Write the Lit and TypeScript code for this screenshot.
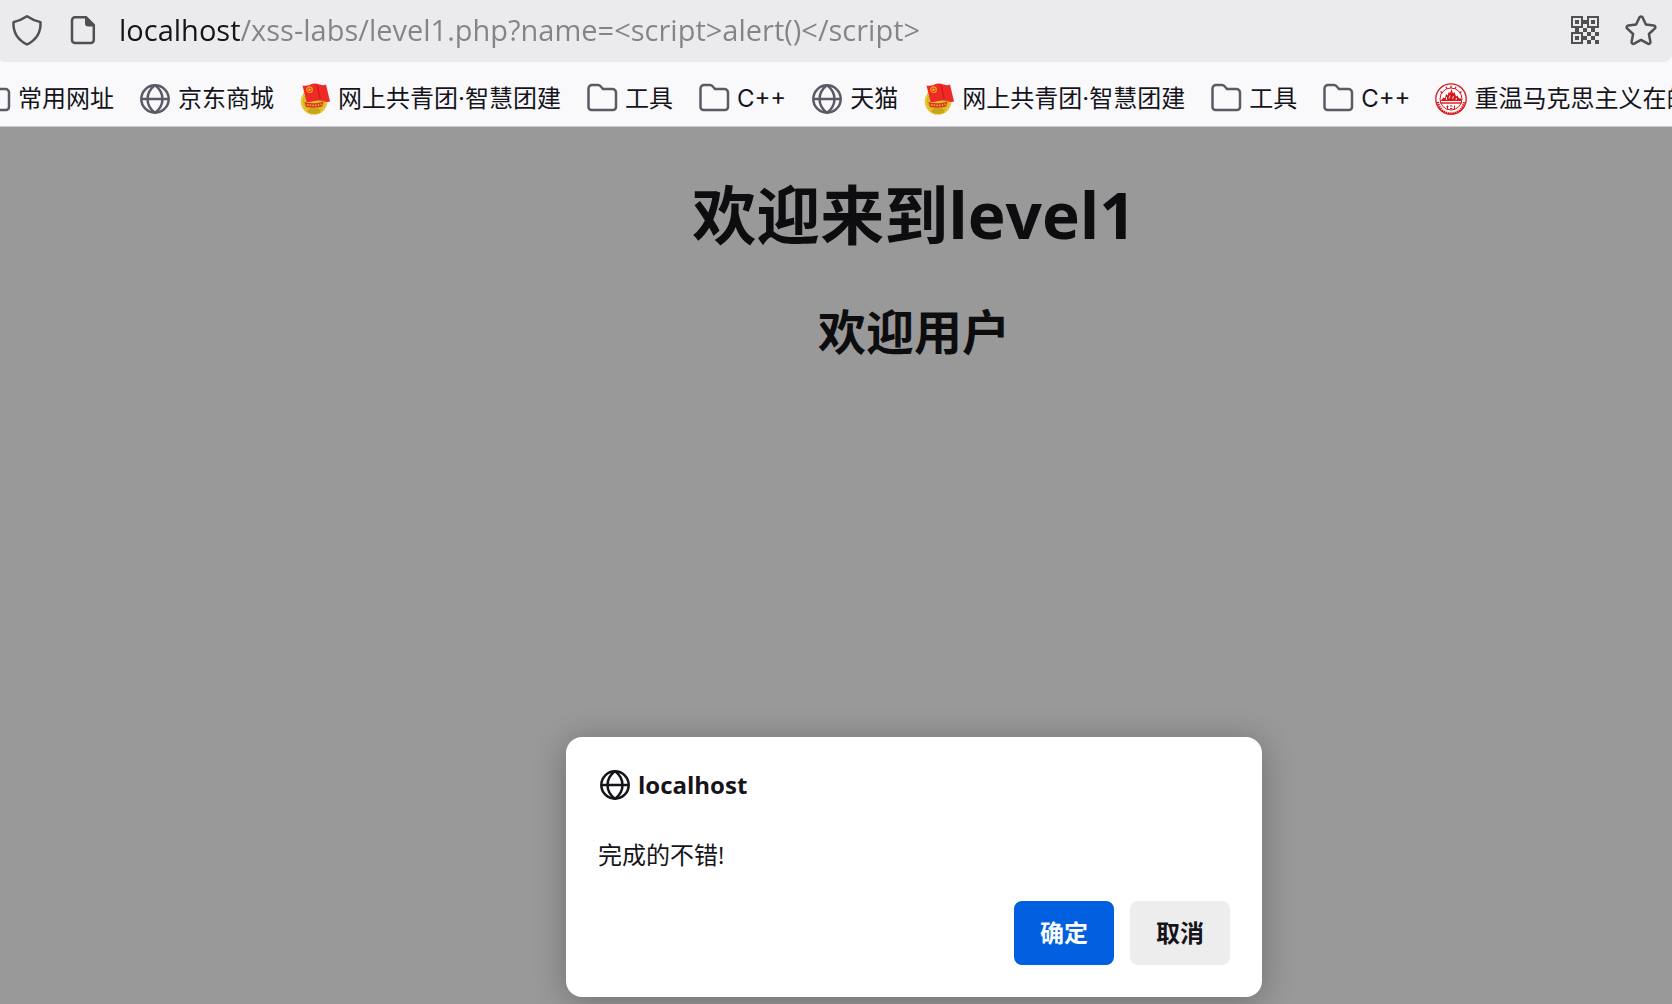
import { LitElement, html, css, svg } from "lit";
import { customElement, property } from "lit/decorators.js";

type IconName = "folder" | "globe" | "league" | "seal";

interface Bookmark {
  icon: IconName;
  label: string;
}

const bookmarks: Bookmark[] = [
  { icon: "folder", label: "常用网址" },
  { icon: "globe", label: "京东商城" },
  { icon: "league", label: "网上共青团·智慧团建" },
  { icon: "folder", label: "工具" },
  { icon: "folder", label: "C++" },
  { icon: "globe", label: "天猫" },
  { icon: "league", label: "网上共青团·智慧团建" },
  { icon: "folder", label: "工具" },
  { icon: "folder", label: "C++" },
  { icon: "seal", label: "重温马克思主义在的" },
];

const icons: Record<string, unknown> = {
  folder: svg`<path d="M2.500 24.500V5.500a3.500 3.500 0 0 1 3.500-3.500h6a3.500 3.500 0 0 1 2.600 1.200l2.400 2.800h9.500a3.500 3.500 0 0 1 3.500 3.500v14.500a3 3 0 0 1-3 3h-21.500a3 3 0 0 1-3-3z" fill="none" stroke="currentColor" stroke-width="2.500"/>`,
  globe: svg`<g fill="none" stroke="currentColor" stroke-width="2.500"><circle cx="16" cy="16" r="13.700"/><path d="M2 16h28M16 2c-10 8-10 20 0 28M16 2c10 8 10 20 0 28"/></g>`,
  shield: svg`<path d="M16 2.200c4 2.700 8.500 4.600 13.500 5.900.5 9.500-3.700 17.500-13.500 22.400C6.200 25.600 2 17.600 2.500 8.100 7.500 6.800 12 4.900 16 2.200z" fill="none" stroke="currentColor" stroke-width="2.500" stroke-linejoin="round"/>`,
  page: svg`<path d="M8 3.200H18.500l8.300 8.300v14.500a3 3 0 0 1-3 3H8a3 3 0 0 1-3-3V6.200a3 3 0 0 1 3-3z" fill="none" stroke="currentColor" stroke-width="2.500"/><path d="M18 2h1.500l8.500 8.500v2h-7a3 3 0 0 1-3-3z" fill="currentColor"/>`,
  star: svg`<path d="M14.400 3.400a1.800 1.800 0 0 1 3.200 0l3.300 7.200 7.800 1a1.700 1.700 0 0 1 1 3l-5.800 5.400 1.500 7.800a1.750 1.750 0 0 1-2.600 1.900L16 25.900l-6.800 3.800a1.750 1.750 0 0 1-2.600-1.900l1.500-7.800-5.800-5.400a1.700 1.700 0 0 1 1-3l7.800-1z" fill="none" stroke="currentColor" stroke-width="2.500" stroke-linejoin="round"/>`,
  qr: svg`<g fill="none" stroke="currentColor" stroke-width="2"><path d="M3 3h10v10H3zM19 3h10v10H19zM3 19h10v10H3z"/></g><path fill="currentColor" d="M6 6h4v4H6zM22 6h4v4h-4zM6 22h4v4H6zM14 6h4v4h-4zM6 14h4v4H6zM14 14h4v4h-4zM22 14h4v4h-4zM18 18h4v4h-4zM26 18h4v4h-4zM14 22h4v4h-4zM22 22h4v4h-4zM18 26h4v4h-4zM26 26h4v4h-4z"/>`,
  league: svg`<circle cx="15" cy="18.500" r="13" fill="#d9b922"/><circle cx="15" cy="18.500" r="12.300" fill="none" stroke="#ecd044" stroke-width="2.500" stroke-dasharray="2 1.500"/><circle cx="15" cy="19" r="9" fill="#e0c02a"/><path d="M8 29c4 2.500 10 2.500 14 0l-3-4h-8z" fill="#c9a51c"/><path d="M3.500 2.500C9 4 13-.5 18 .8c4 1 6 2.200 9 .7l4 17c-4 1.500-7-1.500-12-1-4 .4-7 2-11.500 1.300z" fill="#ee2a27"/><path d="M18 2c1.500 5 2 9 3 14" stroke="#d01c1f" stroke-width="1.500" fill="none"/><path d="M5.500 19c6 2 13 1.700 19-.5l-1.500 5c-5 1.500-11 1.500-16 .5z" fill="#e0301f"/><path d="M8 21.700c5 1.200 10 1 14.500-.6" stroke="#f0b23c" stroke-width="1.800" stroke-dasharray="1.500 1.200" fill="none"/><circle cx="10.500" cy="6.700" r="2.800" fill="none" stroke="#f8a01f" stroke-width="1.200"/><circle cx="10.500" cy="6.700" r="1.200" fill="#f8c21f"/>`,
  seal: svg`<circle cx="16" cy="16" r="15" fill="#fff"/><g fill="none" stroke="#d8141b"><circle cx="16" cy="16" r="15.200" stroke-width="1.300"/><circle cx="16" cy="16" r="11" stroke-width="1"/><path d="M2.800 19a13.300 13.300 0 0 0 26.400 0" stroke-width="2.600" stroke-dasharray="1.400 .9"/><path d="M5.500 8.500l2 1.500M11 3.800l1 2M16 2.500v2.500M21 3.800l-1 2M26.500 8.500l-2 1.500" stroke-width="1.300"/></g><path d="M5.500 18l3-3.500 1.500 1 1-4.500 1.500 1.500L14 8.500l1 2L16.500 6l1.500 4.500 1.500-1.500 1.500 4.500 1.500-1 1.500 3 1.500-.500 1.500 3z" fill="#d8141b"/><path d="M11.500 17v-3M14 15.500l1-3M17.500 16l1-3M21 17l.5-2" stroke="#fff" stroke-width=".9"/><path d="M5.500 20h21" stroke="#d8141b" stroke-width="1.400"/><path d="M11.500 23.500h2M12.500 22.500v3.500M15 23h2.500M15 25.500h2.500M19.500 22.500v3.500" stroke="#d8141b" stroke-width="1.100" fill="none"/>`,
};

@customElement("ui-icon")
export class UiIcon extends LitElement {
  @property() name = "";

  static styles = css`
    :host {
      display: block;
      flex: none;
      width: 32px;
      height: 32px;
    }
    svg {
      display: block;
      width: 100%;
      height: 100%;
    }
  `;

  render() {
    return html`<svg viewBox="0 0 32 32" aria-hidden="true">${icons[this.name]}</svg>`;
  }
}

@customElement("app-root")
export class AppRoot extends LitElement {
  static styles = css`
    :host {
      display: flex;
      flex-direction: column;
      min-height: 100vh;
      overflow: hidden;
      background: #99999a;
      color: #15141a;
      font-family: "Open Sans", "Noto Sans CJK SC", sans-serif;
      font-size: 24px;
      line-height: 32px;
    }
    * {
      box-sizing: border-box;
    }
    button,
    input {
      border: 0;
      padding: 0;
      background: none;
      font: inherit;
      color: inherit;
    }
    .chrome {
      background: #f9f9fb;
      border-bottom: 1px solid #cccccf;
    }
    .address {
      display: flex;
      align-items: center;
      gap: 24px;
      height: 62px;
      padding: 0 15px 2px 11px;
      background: #ebebed;
      border-radius: 0 0 8px 4px;
      color: #4f4f54;
    }
    .url {
      flex: 1;
      min-width: 0;
      height: 48px;
      margin-left: -4px;
      padding-bottom: 2px;
      outline: none;
      font-size: 29px;
      color: transparent;
      background: linear-gradient(90deg, #15141a 121px, #848487 121px);
      -webkit-background-clip: text;
      background-clip: text;
    }
    .bookmarks {
      display: flex;
      gap: 25px;
      margin: 0 0 0 -21px;
      padding: 21px 0 11px;
      list-style: none;
      overflow: hidden;
      font-family: Inter, "Noto Sans CJK SC", sans-serif;
      white-space: nowrap;
    }
    .bookmark {
      display: flex;
      align-items: center;
      gap: 7px;
      color: inherit;
      text-decoration: none;
    }
    .bookmark ui-icon {
      color: #5b5b66;
    }
    .stage {
      flex: 1;
      display: flex;
      flex-direction: column;
      align-items: center;
      padding: 44px 0 7px 156px;
    }
    h1,
    h2 {
      margin: 0;
      color: #0d0d10;
      font-weight: 700;
    }
    h1 {
      font-size: 64px;
      line-height: 88px;
    }
    h2 {
      margin-top: 41px;
      font-size: 48px;
      line-height: 64px;
    }
    .dialog {
      width: 696px;
      max-width: 100%;
      margin-top: auto;
      padding: 32px;
      border-radius: 16px;
      background: #fff;
      box-shadow: 0 4px 32px rgba(12, 12, 13, 0.3);
    }
    .origin {
      display: flex;
      align-items: center;
      gap: 7px;
      padding-left: 1px;
      font-weight: 700;
    }
    .message {
      margin: 38px 0 30px;
    }
    .actions {
      display: flex;
      justify-content: flex-end;
      gap: 16px;
    }
    .action {
      min-width: 100px;
      height: 64px;
      border-radius: 8px;
      background: #ededee;
      font-weight: 700;
    }
    .primary {
      background: #0060df;
      color: #fbfbfe;
    }
  `;

  render() {
    return html`
      <header class="chrome">
        <div class="address">
          <button aria-label="跟踪保护"><ui-icon name="shield"></ui-icon></button>
          <button aria-label="网站信息"><ui-icon name="page"></ui-icon></button>
          <input
            class="url"
            type="text"
            aria-label="网址"
            spellcheck="false"
            .value=${"localhost/xss-labs/level1.php?name=<script>alert()</" + "script>"}
          />
          <button aria-label="二维码"><ui-icon name="qr"></ui-icon></button>
          <button aria-label="添加书签"><ui-icon name="star"></ui-icon></button>
        </div>
        <ul class="bookmarks">
          ${bookmarks.map(
            (item) => html`<li>
              <a class="bookmark" href="#"><ui-icon name=${item.icon}></ui-icon><span>${item.label}</span></a>
            </li>`
          )}
        </ul>
      </header>
      <main class="stage">
        <h1>欢迎来到level1</h1>
        <h2>欢迎用户</h2>
        <section class="dialog" role="alertdialog" aria-labelledby="origin" aria-describedby="message">
          <div class="origin"><ui-icon name="globe"></ui-icon><span id="origin">localhost</span></div>
          <p class="message" id="message">完成的不错!</p>
          <div class="actions">
            <button class="action primary">确定</button>
            <button class="action">取消</button>
          </div>
        </section>
      </main>
    `;
  }
}
